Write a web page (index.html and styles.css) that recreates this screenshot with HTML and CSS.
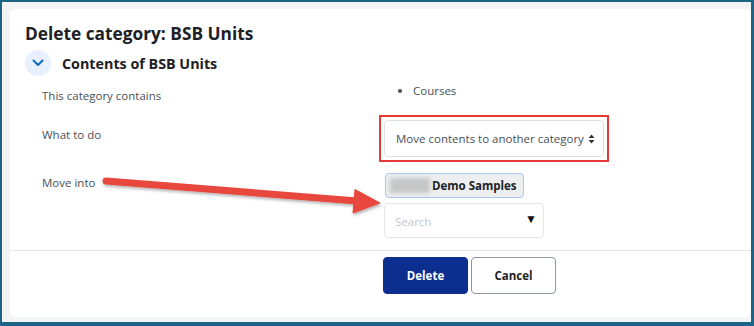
FILE: index.html
```html
<!DOCTYPE html>
<html>
<head>
	<title>Delete category</title>
	<link rel="stylesheet" href="styles.css">
</head>
<body>
	<div class="frame">
		<div class="card">
			<h2 class="page-title">Delete category: BSB Units</h2>
			<div class="section-head">
				<span class="collapse-btn">
					<svg width="12" height="8" viewBox="0 0 12 8"><path d="M1.5 1.5 L6 6 L10.5 1.5" fill="none" stroke="#0f6cbf" stroke-width="2" stroke-linecap="round" stroke-linejoin="round"/></svg>
				</span>
				<h3 class="section-title">Contents of BSB Units</h3>
			</div>

			<div class="form-row row-contains">
				<div class="label">This category contains</div>
				<div class="field">
					<ul class="contains-list">
						<li>Courses</li>
					</ul>
				</div>
			</div>

			<div class="form-row row-action">
				<div class="label">What to do</div>
				<div class="field">
					<div class="highlight">
						<div class="select-box">
							<span>Move contents to another category</span>
							<svg width="7" height="10" viewBox="0 0 7 10"><path d="M3.5 0.5 L6.5 4 L0.5 4 Z M3.5 9.5 L6.5 6 L0.5 6 Z" fill="#333"/></svg>
						</div>
					</div>
				</div>
			</div>

			<div class="form-row row-move">
				<div class="label">Move into</div>
				<div class="field">
					<span class="chip"><span class="blurred"></span>Demo Samples</span>
					<div class="search-box">
						<span class="placeholder">Search</span>
						<span class="caret">&#9660;</span>
					</div>
				</div>
			</div>

			<hr class="divider">

			<div class="actions">
				<button class="btn btn-primary">Delete</button>
				<button class="btn btn-secondary">Cancel</button>
			</div>
		</div>
	</div>

	<!-- annotation arrow -->
	<svg class="annotation" width="754" height="326" viewBox="0 0 754 326">
		<defs>
			<filter id="shade" x="-10%" y="-50%" width="120%" height="200%">
				<feDropShadow dx="1" dy="2" stdDeviation="1.5" flood-color="#000" flood-opacity="0.3"/>
			</filter>
		</defs>
		<g filter="url(#shade)" fill="#e8463d" stroke="#e8463d">
			<line x1="106" y1="181" x2="357" y2="201" stroke-width="7" stroke-linecap="round"/>
			<polygon points="355,189.5 380,203 353,213" stroke-width="1" stroke-linejoin="round"/>
		</g>
	</svg>
</body>
</html>
```

FILE: styles.css
```css
html,
body {
	margin: 0;
	padding: 0;
}

body {
	position: relative;
	width: 754px;
	height: 326px;
	overflow: hidden;
	font-family: "Open Sans", "Liberation Sans", sans-serif;
	color: #1d2125;
}

.frame {
	box-sizing: border-box;
	width: 754px;
	height: 326px;
	border-style: solid;
	border-color: #1d6586;
	border-width: 2px 3px 4px 2px;
	background-color: #f3f4f6;
	padding: 7px 0 5px 8px;
}

.card {
	box-sizing: border-box;
	height: 100%;
	background-color: #fff;
	border-radius: 5px;
	padding: 14px 0 0 0;
}

.page-title {
	margin: 0 0 0 15px;
	font-size: 17.3px;
	font-weight: 700;
	line-height: 22px;
}

.section-head {
	display: flex;
	align-items: center;
	gap: 11px;
	margin: 5px 0 0 15px;
}

.collapse-btn {
	display: flex;
	align-items: center;
	justify-content: center;
	width: 26px;
	height: 26px;
	border-radius: 50%;
	background-color: #e7f0fc;
}

.section-title {
	margin: 0;
	font-size: 14.3px;
	font-weight: 700;
}

.form-row {
	display: grid;
	grid-template-columns: 342px 1fr;
	padding-left: 32px;
}

.label {
	font-size: 11.5px;
	line-height: 20px;
	color: #495057;
}

.row-contains {
	margin-top: 5px;
}

.row-contains .label {
	padding-top: 5px;
}

.contains-list {
	margin: 0;
	padding-left: 29px;
	font-size: 11.5px;
	line-height: 20px;
	color: #495057;
}

.row-action {
	margin-top: 9px;
}

.row-action .label {
	padding-top: 10px;
}

.highlight {
	display: inline-block;
	margin-left: -5px;
	padding: 3px;
	border: 2px solid #e53935;
}

.select-box {
	box-sizing: border-box;
	display: flex;
	align-items: center;
	justify-content: space-between;
	width: 220px;
	height: 37px;
	padding: 0 8px 0 11px;
	border: 1px solid #dee2e6;
	border-radius: 4px;
	font-size: 11.5px;
	color: #495057;
}

.row-move {
	margin-top: 11px;
}

.chip {
	display: inline-flex;
	align-items: center;
	box-sizing: border-box;
	height: 25px;
	margin-left: 1px;
	padding: 0 6px 0 4px;
	background-color: #eceef0;
	border: 1px solid #a9c9ee;
	border-radius: 4px;
	font-size: 11.5px;
	font-weight: 700;
	color: #1d2125;
}

.blurred {
	display: inline-block;
	width: 40px;
	height: 15px;
	margin-right: 2px;
	background-color: #c6c6c6;
	filter: blur(2px);
}

.search-box {
	box-sizing: border-box;
	display: flex;
	align-items: center;
	justify-content: space-between;
	width: 160px;
	height: 35px;
	margin-top: 5px;
	padding: 0 6px 0 10px;
	border: 1px solid #e3e5e8;
	border-radius: 4px;
	font-size: 11.5px;
}

.placeholder {
	color: #c4c8cc;
	padding-top: 2px;
}

.caret {
	font-size: 12px;
	color: #111;
	margin-top: -4px;
}

.divider {
	margin: 12px 0 0 0;
	border: none;
	border-top: 1px solid #e3e5e8;
}

.actions {
	display: flex;
	gap: 3px;
	margin: 6px 0 0 373px;
}

.btn {
	box-sizing: border-box;
	width: 85px;
	height: 37px;
	border-radius: 4px;
	font-family: "Open Sans", "Liberation Sans", sans-serif;
	font-size: 11.5px;
	font-weight: 700;
}

.btn-primary {
	background-color: #0c2f8f;
	border: 1px solid #0c2f8f;
	color: #fff;
}

.btn-secondary {
	background-color: #fff;
	border: 1px solid #8f959e;
	color: #1d2125;
}

.annotation {
	position: absolute;
	top: 0;
	left: 0;
	pointer-events: none;
}
```
